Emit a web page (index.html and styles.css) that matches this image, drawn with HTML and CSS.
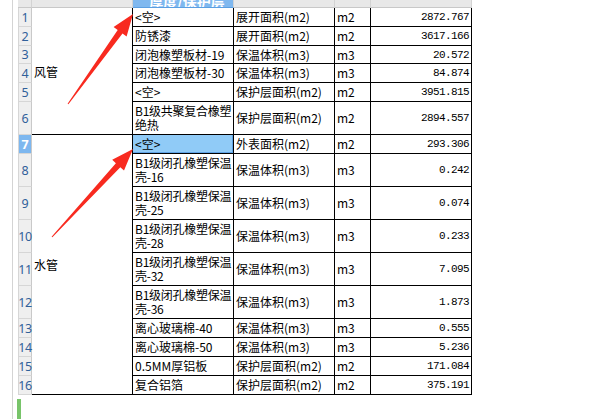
FILE: index.html
```html
<!DOCTYPE html>
<html lang="zh">
<head>
<meta charset="utf-8">
<link rel="stylesheet" href="styles.css">
</head>
<body>
<div class="page">
  <div class="gutter"></div>
  <div class="main">
    <div class="sheet">
      <div class="hd"></div>
      <div class="hd"></div>
      <div class="hd hd-sel"><span>厚度/保护层</span></div>
      <div class="hd"></div>
      <div class="hd"></div>
      <div class="hd"></div>

      <div class="rh">1</div>
      <div class="grp grp-a">风管</div>
      <div class="c">&lt;空&gt;</div><div class="c">展开面积(m2)</div><div class="c">m2</div><div class="c num">2872.767</div>

      <div class="rh">2</div>
      <div class="c">防锈漆</div><div class="c">展开面积(m2)</div><div class="c">m2</div><div class="c num">3617.166</div>

      <div class="rh">3</div>
      <div class="c">闭泡橡塑板材-19</div><div class="c">保温体积(m3)</div><div class="c">m3</div><div class="c num">20.572</div>

      <div class="rh">4</div>
      <div class="c">闭泡橡塑板材-30</div><div class="c">保温体积(m3)</div><div class="c">m3</div><div class="c num">84.874</div>

      <div class="rh">5</div>
      <div class="c">&lt;空&gt;</div><div class="c">保护层面积(m2)</div><div class="c">m2</div><div class="c num">3951.815</div>

      <div class="rh">6</div>
      <div class="c wrap">B1级共聚复合橡塑<br>绝热</div><div class="c">保护层面积(m2)</div><div class="c">m2</div><div class="c num">2894.557</div>

      <div class="rh rh-sel">7</div>
      <div class="grp grp-b">水管</div>
      <div class="c c-sel">&lt;空&gt;</div><div class="c">外表面积(m2)</div><div class="c">m2</div><div class="c num">293.306</div>

      <div class="rh">8</div>
      <div class="c wrap">B1级闭孔橡塑保温<br>壳-16</div><div class="c">保温体积(m3)</div><div class="c">m3</div><div class="c num">0.242</div>

      <div class="rh">9</div>
      <div class="c wrap">B1级闭孔橡塑保温<br>壳-25</div><div class="c">保温体积(m3)</div><div class="c">m3</div><div class="c num">0.074</div>

      <div class="rh">10</div>
      <div class="c wrap">B1级闭孔橡塑保温<br>壳-28</div><div class="c">保温体积(m3)</div><div class="c">m3</div><div class="c num">0.233</div>

      <div class="rh">11</div>
      <div class="c wrap">B1级闭孔橡塑保温<br>壳-32</div><div class="c">保温体积(m3)</div><div class="c">m3</div><div class="c num">7.095</div>

      <div class="rh">12</div>
      <div class="c wrap">B1级闭孔橡塑保温<br>壳-36</div><div class="c">保温体积(m3)</div><div class="c">m3</div><div class="c num">1.873</div>

      <div class="rh">13</div>
      <div class="c">离心玻璃棉-40</div><div class="c">保温体积(m3)</div><div class="c">m3</div><div class="c num">0.555</div>

      <div class="rh">14</div>
      <div class="c">离心玻璃棉-50</div><div class="c">保温体积(m3)</div><div class="c">m3</div><div class="c num">5.236</div>

      <div class="rh">15</div>
      <div class="c">0.5MM厚铝板</div><div class="c">保护层面积(m2)</div><div class="c">m2</div><div class="c num">171.084</div>

      <div class="rh">16</div>
      <div class="c">复合铝箔</div><div class="c">保护层面积(m2)</div><div class="c">m2</div><div class="c num">375.191</div>
    </div>
    <div class="tab"></div>
  </div>
  <svg class="arrows" width="604" height="419" viewBox="0 0 604 419">
    <polygon points="133,14 126.6,36.5 122.5,33.6 68.4,104.3 67.6,103.7 117.7,30.0 113.6,27.1" />
    <polygon points="133,149 124.0,170.6 120.3,167.2 52.4,237.3 51.6,236.7 115.9,163.2 112.2,159.8" />
  </svg>
</div>
</body>
</html>
```

FILE: styles.css
```css
html, body {
  margin: 0;
  padding: 0;
  background: #fff;
}

body {
  width: 604px;
  height: 419px;
  overflow: hidden;
  font-family: "Noto Sans CJK SC", "Noto Sans", sans-serif;
  font-size: 12px;
  color: #000;
}

.page {
  position: relative;
  display: flex;
  height: 419px;
}

.gutter {
  width: 12px;
  height: 419px;
  border-right: 1px solid #d4d4d4;
}

.main {
  display: flex;
  flex-direction: column;
  margin-left: 4px;
}

.sheet {
  margin-left: 1px;
  display: grid;
  grid-template-columns: 14px 101px 101px 101px 36px 101px;
  grid-template-rows: 8px 19px 19px 18px 19px 19px 33px 19px 33px 33px 33px 33px 33px 19px 19px 19px 19px;
}

.sheet > div {
  box-sizing: border-box;
  min-width: 0;
}

.hd {
  background: #e8e8e8;
  border-bottom: 1px solid #c8c8c8;
  border-right: 1px solid #d3d3d3;
}

.hd-sel {
  background: #7fb8ef;
  border-bottom: 1px solid #5b9fe2;
  border-right: 1px solid #d3d3d3;
  display: flex;
  align-items: flex-end;
  justify-content: center;
  overflow: hidden;
  color: #fff;
  font-weight: bold;
  font-size: 14px;
  padding-left: 8px;
}

.hd-sel span {
  line-height: 16px;
  margin-bottom: -2px;
  white-space: nowrap;
}

.rh {
  grid-column: 1;
  background: #efefef;
  border-left: 1px solid #d6d6d6;
  border-right: 1px solid #c9c9c9;
  border-bottom: 1px solid #d6d6d6;
  display: flex;
  align-items: center;
  justify-content: center;
  font-family: "Noto Sans", sans-serif;
  font-size: 12.5px;
  color: #30609a;
  overflow: visible;
  white-space: nowrap;
  letter-spacing: -0.3px;
}

.rh-sel {
  background: #7db7ef;
  color: #fff;
  font-weight: bold;
}

.grp {
  grid-column: 2;
  border-right: 1px solid #000;
  border-bottom: 1px solid #000;
  display: flex;
  align-items: center;
  padding-left: 2px;
}

.grp-a {
  grid-row: 2 / span 6;
}

.grp-b {
  grid-row: 8 / span 10;
}

.c {
  border-right: 1px solid #000;
  border-bottom: 1px solid #000;
  padding: 0 2px;
  display: flex;
  align-items: center;
  white-space: nowrap;
  overflow: hidden;
  line-height: 14px;
}

.wrap {
  letter-spacing: -0.25px;
}

.c-sel {
  background: #90cbf7;
  box-shadow: inset -1px -1px 0 #5fa3e6;
}

.num {
  justify-content: flex-end;
  font-family: "Liberation Mono", monospace;
  font-size: 11px;
  letter-spacing: -0.6px;
  padding-right: 2px;
}

.tab {
  width: 4px;
  height: 20px;
  margin-top: 4px;
  background: #78c46a;
}

.arrows {
  position: absolute;
  left: 0;
  top: 0;
  pointer-events: none;
}

.arrows polygon {
  fill: #f82a1f;
}
```
